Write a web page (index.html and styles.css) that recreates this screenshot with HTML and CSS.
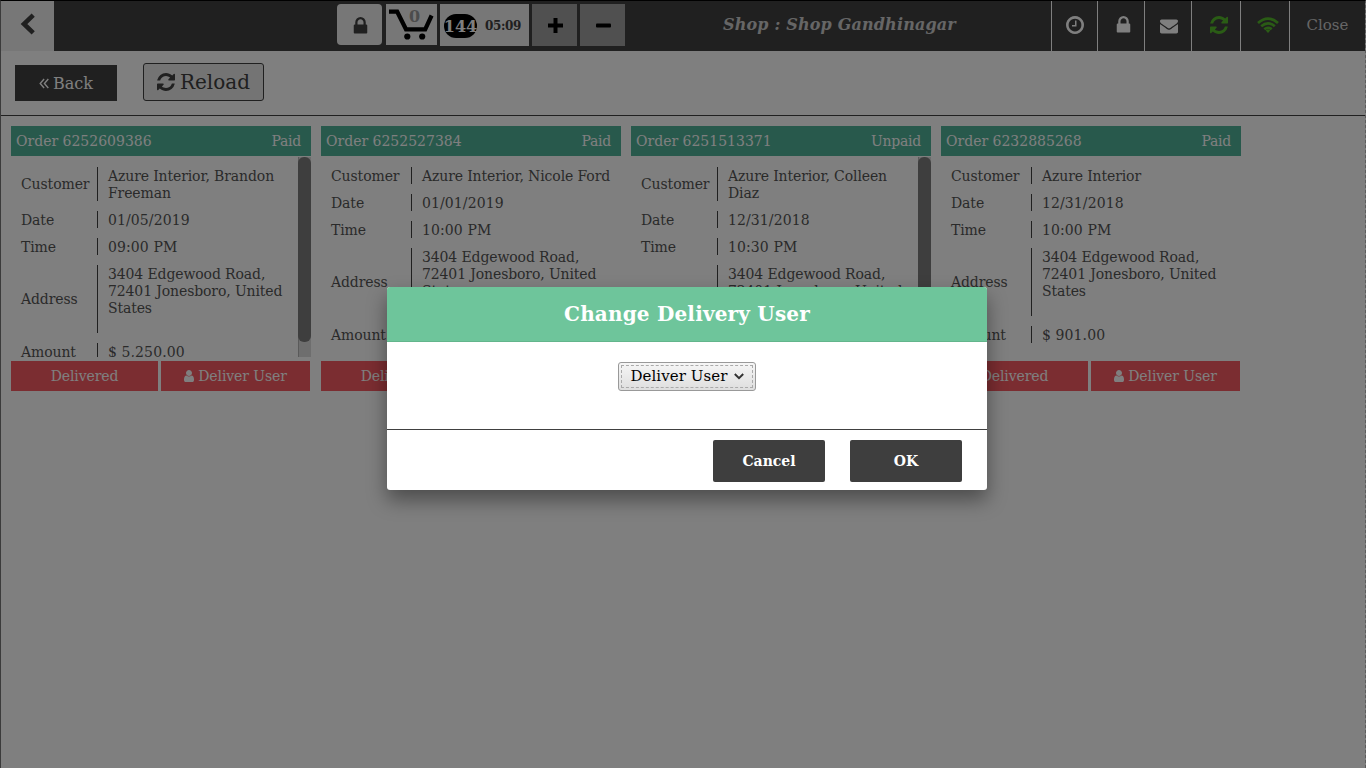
FILE: index.html
```html
<!DOCTYPE html>
<html lang="en">
<head>
<meta charset="utf-8">
<title>Orders</title>
<link rel="stylesheet" href="styles.css">
</head>
<body>
<svg class="defs" width="0" height="0">
  <symbol id="lock" viewBox="0 128 1152 1536"><path d="M320 768h512v-192q0-106-75-181t-181-75-181 75-75 181v192zm832 96v576q0 40-28 68t-68 28h-960q-40 0-68-28t-28-68v-576q0-40 28-68t68-28h32v-192q0-184 132-316t316-132 316 132 132 316v192h32q40 0 68 28t28 68z"/></symbol>
  <symbol id="mail" viewBox="0 256 1792 1408"><path d="M1792 710v794q0 66-47 113t-113 47h-1472q-66 0-113-47t-47-113v-794q44 49 101 87 362 246 497 345 57 42 92.500 65.500t94.500 48 110 24.500h2q51 0 110-24.500t94.500-48 92.500-65.500q170-123 498-345 57-39 100-87zm0-294q0 79-49 151t-122 123q-376 261-468 325-10 7-42.500 31t-54 38.500-52 32.500-57.500 27-50 9h-2q-23 0-50-9t-57.500-27-52-32.500-54-38.500-42.500-31q-91-64-262-182.500t-205-142.500q-62-42-117-115.500t-55-136.500q0-78 41.500-130t118.500-52h1472q65 0 112.500 47t47.500 113z"/></symbol>
  <symbol id="refresh" viewBox="0 128 1536 1536"><path d="M1511 1056q0 5-1 7-64 268-268 434.500t-478 166.500q-146 0-282.500-55t-243.500-157l-129 129q-19 19-45 19t-45-19-19-45v-448q0-26 19-45t45-19h448q26 0 45 19t19 45-19 45l-137 137q71 66 161 102t187 36q134 0 250-65t186-179q11-17 53-117 8-23 30-23h192q13 0 22.500 9.500t9.500 22.500zm25-800v448q0 26-19 45t-45 19h-448q-26 0-45-19t-19-45 19-45l138-138q-148-137-349-137-134 0-250 65t-186 179q-11 17-53 117-8 23-30 23h-199q-13 0-22.500-9.500t-9.500-22.500v-7q65-268 270-434.500t480-166.500q146 0 284 55.500t245 156.500l130-129q19-19 45-19t45 19 19 45z"/></symbol>
  <symbol id="clock" viewBox="0 128 1536 1536"><path d="M896 544v448q0 14-9 23t-23 9h-320q-14 0-23-9t-9-23v-64q0-14 9-23t23-9h224v-352q0-14 9-23t23-9h64q14 0 23 9t9 23zm416 352q0-148-73-273t-198-198-273-73-273 73-198 198-73 273 73 273 198 198 273 73 273-73 198-198 73-273zm224 0q0 209-103 385.500t-279.500 279.500-385.500 103-385.500-103-279.500-279.500-103-385.500 103-385.500 279.500-279.500 385.500-103 385.500 103 279.500 279.500 103 385.500z"/></symbol>
  <symbol id="user" viewBox="0 128 1280 1536" preserveAspectRatio="none"><path d="M1280 1399q0 109-62.500 187t-150.500 78h-854q-88 0-150.500-78t-62.500-187q0-85 8.500-160.500t31.500-152 58.500-131 94-89 134.500-34.500q131 128 313 128t313-128q76 0 134.500 34.500t94 89 58.500 131 31.500 152 8.500 160.500zm-256-887q0 159-112.500 271.500t-271.500 112.500-271.500-112.500-112.500-271.500 112.500-271.500 271.500-112.500 271.500 112.500 112.500 271.500z"/></symbol>
  <symbol id="wifi" viewBox="0 0 22 16"><g fill="none" stroke="currentColor" stroke-width="2.700"><path d="M1 6Q11-2.800 21 6M4.200 9.300Q11 3.400 17.800 9.300M7.300 12.300Q11 9.300 14.700 12.300"/></g><path d="M8.700 13.400Q11 11.800 13.300 13.400L11 15.900z"/></symbol>
</svg>
<div class="screen">
  <header class="topbar">
    <div class="nav-back"><svg width="16" height="22" viewBox="0 0 16 22"><path d="M13.200 2.200L4 11l9.200 8.800" fill="none" stroke="currentColor" stroke-width="4.600"/></svg></div>
    <div class="tools">
      <div class="tool tool-lock"><svg width="15" height="18"><use href="#lock"/></svg></div>
      <div class="tool tool-cart">
        <svg width="45" height="32" viewBox="0 0 45 32"><path d="M0 2.700H8.200L17 20.300H36.200L42.600 6.500" fill="none" stroke="currentColor" stroke-width="4.200"/><circle cx="18.300" cy="27.500" r="3.100"/><circle cx="33.200" cy="27.500" r="3.100"/></svg>
        <span class="cart-count">0</span>
      </div>
      <div class="tool tool-order"><span class="pill">144</span><span class="time">05:09</span></div>
      <div class="tool tool-sign"><svg width="15" height="15"><path d="M5.500 0h4v5.500h5.500v4H9.500V15h-4V9.500H0v-4h5.500z"/></svg></div>
      <div class="tool tool-sign"><svg width="15" height="15"><rect y="5.500" width="15" height="4" rx="1"/></svg></div>
    </div>
    <div class="shop">Shop : Shop Gandhinagar</div>
    <div class="status">
      <div class="cell c1"><svg width="18" height="18"><use href="#clock"/></svg></div>
      <div class="cell c2"><svg width="15" height="18"><use href="#lock"/></svg></div>
      <div class="cell c2 mail"><svg width="18" height="15"><use href="#mail"/></svg></div>
      <div class="cell c3 green"><svg width="18" height="18"><use href="#refresh"/></svg></div>
      <div class="cell c3 green"><svg width="22" height="16"><use href="#wifi"/></svg></div>
      <div class="cell close">Close</div>
    </div>
  </header>
  <div class="actions">
    <div class="btn-back"><svg width="10" height="11" viewBox="0 0 10 11"><path d="M5.100 1L1.200 5.500l3.900 4.500M9.300 1L5.400 5.500l3.900 4.500" fill="none" stroke="currentColor" stroke-width="1.400"/></svg>Back</div>
    <div class="btn-reload"><svg width="18" height="18"><use href="#refresh"/></svg>Reload</div>
  </div>
  <main class="orders">
    <section class="card narrow">
      <div class="card-head"><span>Order 6252609386</span><span class="state">Paid</span></div>
      <div class="card-body">
        <div class="row tall"><label>Customer</label><p class="name">Azure Interior, Brandon Freeman</p></div>
        <div class="row"><label>Date</label><p>01/05/2019</p></div>
        <div class="row"><label>Time</label><p>09:00 PM</p></div>
        <div class="row tall"><label>Address</label><p class="name addr">3404 Edgewood Road,<br>72401 Jonesboro, United States</p></div>
        <div class="row"><label>Amount</label><p>$ 5,250.00</p></div>
        <div class="scroll"><i></i></div>
      </div>
      <div class="card-foot"><div>Delivered</div><div><svg width="10" height="12"><use href="#user"/></svg>Deliver User</div></div>
    </section>
    <section class="card">
      <div class="card-head"><span>Order 6252527384</span><span class="state">Paid</span></div>
      <div class="card-body">
        <div class="row"><label>Customer</label><p class="name">Azure Interior, Nicole Ford</p></div>
        <div class="row"><label>Date</label><p>01/01/2019</p></div>
        <div class="row"><label>Time</label><p>10:00 PM</p></div>
        <div class="row tall"><label>Address</label><p class="name addr">3404 Edgewood Road,<br>72401 Jonesboro, United States</p></div>
        <div class="row"><label>Amount</label><p></p></div>
      </div>
      <div class="card-foot"><div>Delivered</div><div></div></div>
    </section>
    <section class="card narrow">
      <div class="card-head"><span>Order 6251513371</span><span class="state">Unpaid</span></div>
      <div class="card-body">
        <div class="row tall"><label>Customer</label><p class="name">Azure Interior, Colleen Diaz</p></div>
        <div class="row"><label>Date</label><p>12/31/2018</p></div>
        <div class="row"><label>Time</label><p>10:30 PM</p></div>
        <div class="row tall"><label></label><p class="name addr">3404 Edgewood Road,<br>72401 Jonesboro, United</p></div>
        <div class="scroll"><i></i></div>
      </div>
      <div class="card-foot"><div></div><div></div></div>
    </section>
    <section class="card">
      <div class="card-head"><span>Order 6232885268</span><span class="state">Paid</span></div>
      <div class="card-body">
        <div class="row"><label>Customer</label><p class="name">Azure Interior</p></div>
        <div class="row"><label>Date</label><p>12/31/2018</p></div>
        <div class="row"><label>Time</label><p>10:00 PM</p></div>
        <div class="row tall"><label>Address</label><p class="name addr">3404 Edgewood Road,<br>72401 Jonesboro, United States</p></div>
        <div class="row"><label>Amount</label><p>$ 901.00</p></div>
      </div>
      <div class="card-foot"><div>Delivered</div><div><svg width="10" height="12"><use href="#user"/></svg>Deliver User</div></div>
    </section>
  </main>
</div>
<div class="overlay">
  <div class="modal">
    <div class="modal-head">Change Delivery User</div>
    <div class="modal-body">
      <div class="select"><span>Deliver User</span><svg width="10" height="7" viewBox="0 0 10 7"><path d="M.8 1L5 5.200 9.200 1" fill="none" stroke="#333" stroke-width="2"/></svg></div>
    </div>
    <div class="modal-foot"><div class="mbtn">Cancel</div><div class="mbtn">OK</div></div>
  </div>
</div>
</body>
</html>
```
FILE: styles.css
```css
* { box-sizing: border-box; }
body { margin: 0; font: 14px/17px "DejaVu Serif", serif; color: #555; overflow: hidden; }
svg { display: block; flex: none; fill: currentColor; }
.defs { position: absolute; }
p { margin: 0; }

.screen { height: 768px; background: #fff; border-top: 1px solid #000; border-left: 1px solid #777; border-right: 1px dashed #bbb; }

.topbar { display: flex; height: 50px; background: #404040; }
.nav-back { width: 53px; background: #efefef; color: #404040; padding: 12px 0 0 19px; }
.tools { display: flex; width: 571px; padding: 3px 0 0 283px; }
.tool { display: flex; flex: none; align-items: center; justify-content: center; height: 42px; background: #efefef; color: #404040; }
.tool-lock { width: 45px; height: 41px; border-radius: 4px; margin-right: 4px; padding: 2px 0 0 1px; }
.tool-cart { position: relative; width: 51px; height: 41px; margin-right: 3px; color: #000; }
.cart-count { position: absolute; left: 23px; top: 4px; font-weight: bold; font-size: 16px; color: #999; }
.tool-order { width: 89px; margin-right: 3px; justify-content: flex-start; padding: 2px 0 0 4px; }
.pill { width: 33px; height: 24px; border-radius: 12px; background: #000; color: #fff; font-size: 16px; font-weight: bold; line-height: 25px; display: flex; justify-content: center; }
.time { margin-left: 8px; font-weight: bold; font-size: 12px; letter-spacing: -.4px; padding-top: 1px; }
.tool-sign { width: 45px; background: #a0a0a0; color: #000; margin-right: 3px; padding: 1px 0 0 1px; }
.shop { flex: 1; padding: 14px 0 0 98px; font-size: 16px; line-height: 19px; letter-spacing: .16px; font-weight: bold; font-style: italic; color: #ccc; white-space: nowrap; }
.status { display: flex; color: #fff; }
.cell { display: flex; align-items: center; justify-content: center; border-left: 1px solid #fff; padding-bottom: 2px; }
.c1 { width: 46px; }
.c2 { width: 47px; padding-left: 5px; }
.mail { padding-left: 1px; padding-bottom: 0; }
.c3 { width: 49px; padding-left: 5px; }
.green { color: #55b82a; }
.close { width: 76px; font-size: 15px; color: #ccc; }

.actions { display: flex; align-items: flex-start; height: 65px; padding: 12px 0 0 14px; border-bottom: 1px solid #404040; }
.btn-back { display: flex; align-items: center; justify-content: center; gap: 4px; width: 102px; height: 36px; margin: 2px 26px 0 0; background: #404040; color: #fff; font-size: 16px; }
.btn-reload { display: flex; align-items: center; justify-content: center; gap: 5px; width: 121px; height: 38px; border: 1px solid #404040; border-radius: 3px; background: #e9e9e9; color: #404040; font-size: 20px; }

.orders { display: flex; gap: 10px; padding: 10px; }
.card { width: 300px; flex: none; }
.card-head { display: flex; justify-content: space-between; height: 30px; padding: 7px 10px 0 5px; background: #50b299; color: #fff; }
.state { letter-spacing: -.25px; }
.card-body { position: relative; height: 200px; margin: 1px 0 4px; padding: 10px 0 0 10px; overflow: hidden; }
.row { display: flex; align-items: center; margin-bottom: 10px; background: linear-gradient(#404040, #404040) 80px 0 / 1px 100% no-repeat; }
.row label { width: 80px; letter-spacing: -.1px; }
.row:not(.tall) label { line-height: 19px; margin-bottom: -2px; }
.row p { align-self: stretch; width: 205px; min-height: 18px; margin-bottom: -1px; padding: 1px 0 0 11px; letter-spacing: .1px; }
.row .name { letter-spacing: -.12px; }
.narrow .row { background-position-x: 76px; }
.narrow .row label { width: 76px; }
.narrow .row p { width: 192px; }
.row .addr { min-height: 69px; }
.scroll { position: absolute; right: 0; top: 0; width: 13px; height: 200px; background: #dcdcdc; border-left: 1px solid #b5b5b5; }
.scroll i { display: block; height: 185px; margin-left: -1px; border-radius: 6px; background: #7c7c7c; }
.card-foot { display: flex; gap: 3px; height: 30px; color: #fff; letter-spacing: -.1px; }
.card-foot div { display: flex; align-items: center; justify-content: center; gap: 4px; width: 149px; background: #f65a62; }
.card-foot div:first-child { width: 147px; }

.overlay { position: absolute; inset: 0; background: rgba(0,0,0,.5); }
.modal { position: absolute; left: 387px; top: 287px; width: 600px; height: 203px; border-radius: 3px; background: #fff; box-shadow: 0 10px 20px rgba(0,0,0,.4); overflow: hidden; }
.modal-head { height: 55px; background: #6ec59b; border-bottom: 1px solid #63b58c; color: #fff; font-size: 20px; line-height: 54px; letter-spacing: .18px; font-weight: bold; text-align: center; }
.modal-body { display: flex; justify-content: center; height: 87px; padding: 20px 0 0; }
.select { display: flex; align-items: center; justify-content: center; gap: 6px; width: 138px; height: 29px; border: 1px solid #999; border-radius: 3px; background: linear-gradient(#f6f6f6, #dedede); color: #000; font-size: 15px; letter-spacing: .08px; outline: 1px dashed #aaa; outline-offset: -4px; }
.modal-foot { display: flex; justify-content: flex-end; gap: 25px; padding: 10px 25px; border-top: 1px solid #404040; }
.mbtn { width: 112px; height: 42px; border-radius: 2px; background: #3e3e3e; color: #fff; font-weight: bold; line-height: 42px; text-align: center; }
```
